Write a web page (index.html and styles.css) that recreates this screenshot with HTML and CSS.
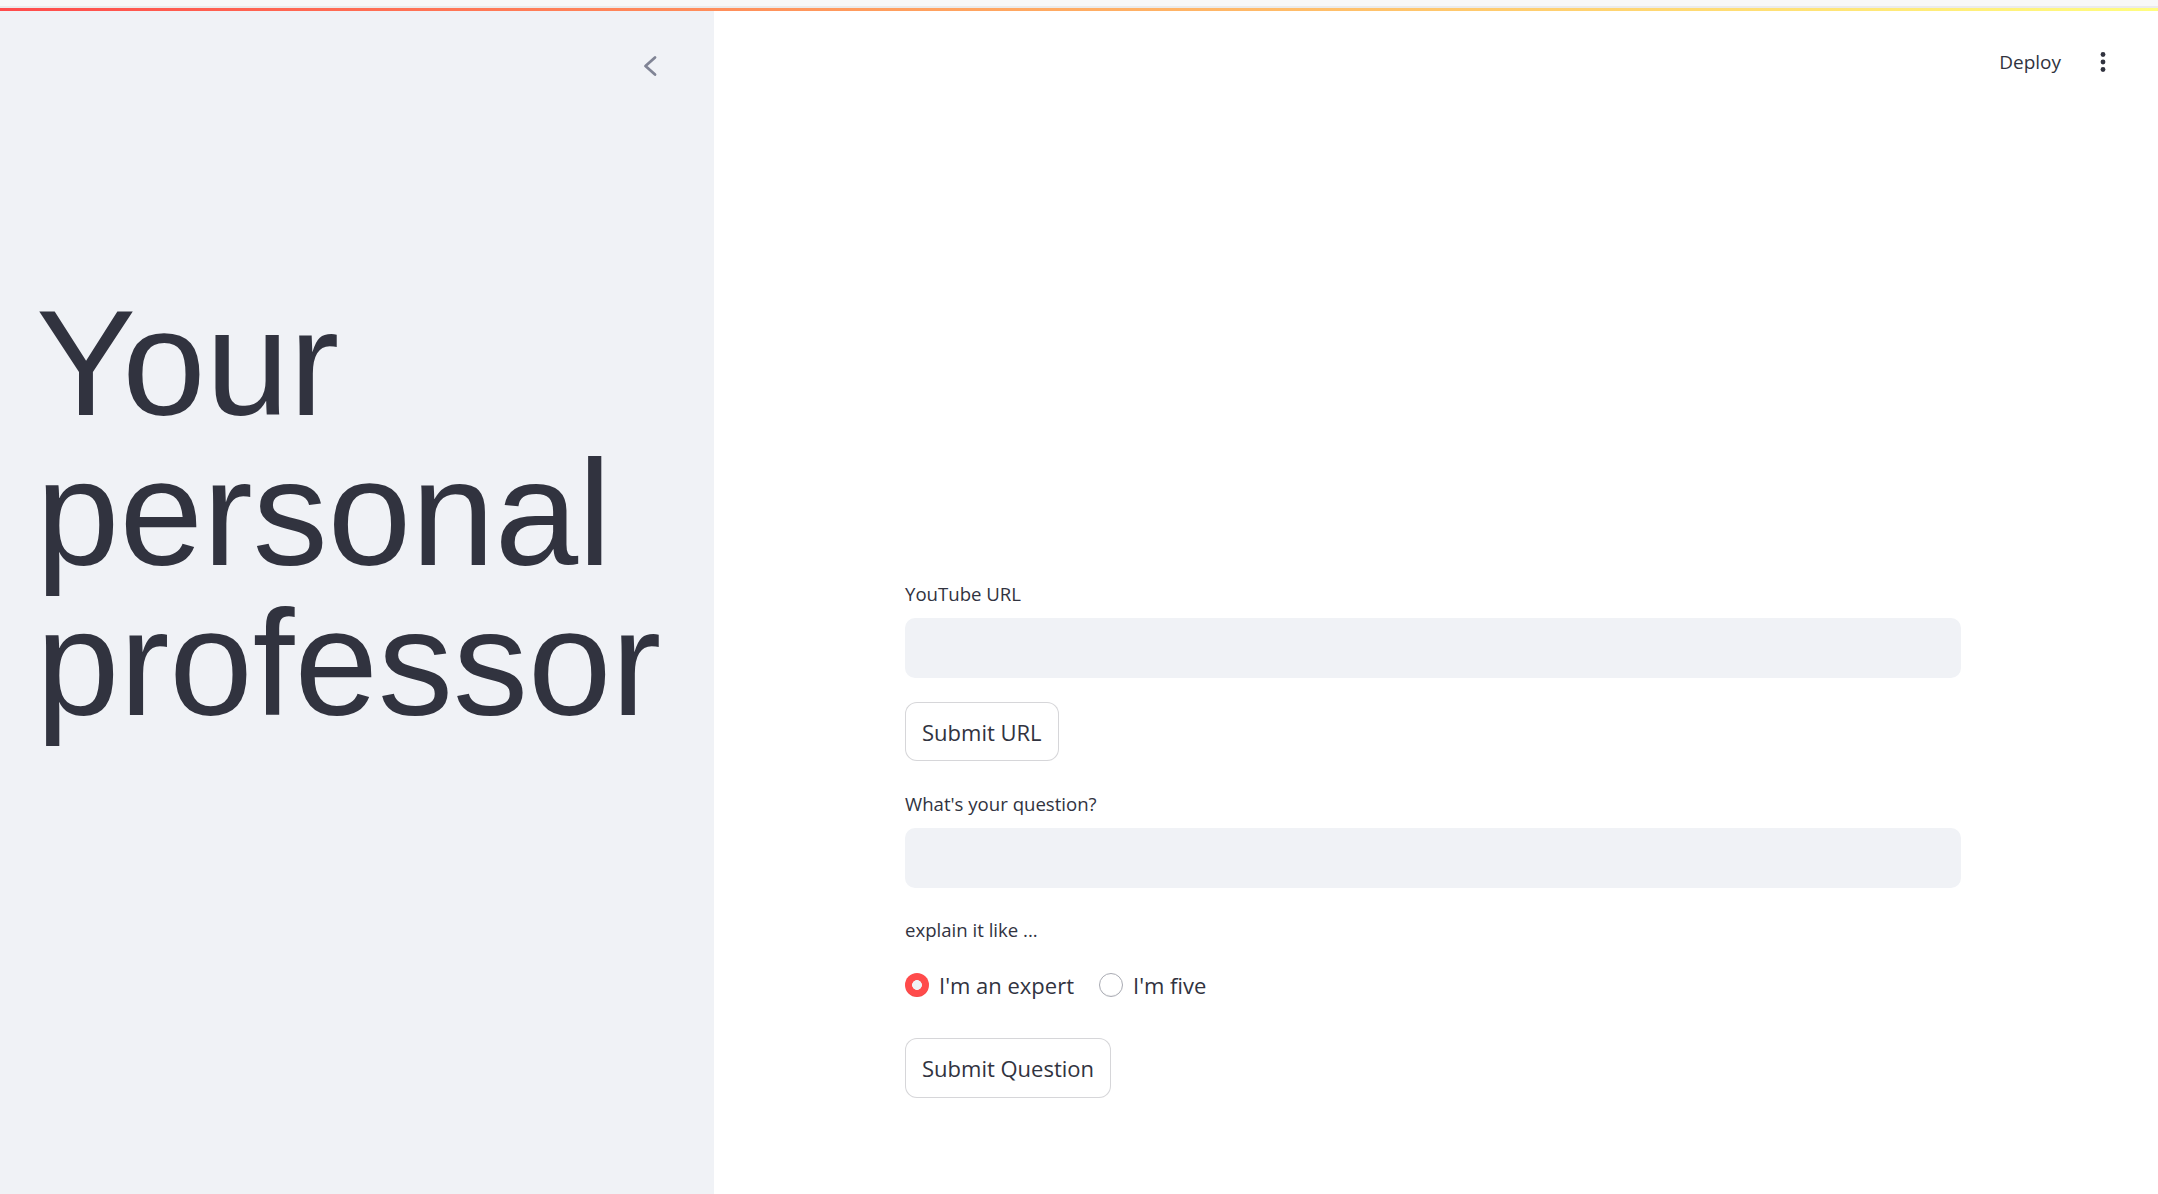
FILE: index.html
```html
<!DOCTYPE html>
<html lang="en">
<head>
<meta charset="utf-8">
<title>Your personal professor</title>
<link rel="stylesheet" href="styles.css">
</head>
<body>
<div class="topband"></div>
<div class="decoration"></div>
<div class="app">
  <aside class="sidebar">
    <div class="sidebar-head">
      <svg class="collapse" width="20" height="24" viewBox="0 0 20 24" aria-hidden="true">
        <path d="M15 3.5 L5.5 12 L15 20.5" fill="none" stroke="#808495" stroke-width="2.8" stroke-linecap="round" stroke-linejoin="round"/>
      </svg>
    </div>
    <h1 class="title">Your<br>personal<br>professor</h1>
  </aside>
  <main class="main">
    <header class="main-head">
      <span class="deploy">Deploy</span>
      <svg class="menu" width="24" height="24" viewBox="0 0 24 24" aria-hidden="true">
        <circle cx="12" cy="4.5" r="2.4" fill="#31333f"/>
        <circle cx="12" cy="12" r="2.4" fill="#31333f"/>
        <circle cx="12" cy="19.5" r="2.4" fill="#31333f"/>
      </svg>
    </header>
    <section class="content">
      <div class="label">YouTube URL</div>
      <div class="input"></div>
      <div><button class="btn btn-url">Submit URL</button></div>
      <div class="label">What's your question?</div>
      <div class="input input-q"></div>
      <div class="label">explain it like ...</div>
      <div class="radios">
        <div class="option"><span class="radio checked"></span><span>I'm an expert</span></div>
        <div class="option"><span class="radio"></span><span>I'm five</span></div>
      </div>
      <div><button class="btn btn-q">Submit Question</button></div>
    </section>
  </main>
</div>
</body>
</html>
```
FILE: styles.css
```css
* { box-sizing: border-box; }
html, body { margin: 0; padding: 0; }
body {
  font-family: "Open Sans", "Noto Sans", sans-serif;
  color: #31333f;
  background: #ffffff;
  height: 1194px;
  overflow: hidden;
}
.topband {
  height: 8px;
  background: #f8f8f8;
  border-bottom: 2px solid #ebebeb;
}
.decoration {
  height: 3px;
  background: linear-gradient(90deg, #ff4b4b 0%, #ff9c5e 40%, #fffd80 100%);
}
.app {
  display: flex;
  height: calc(1194px - 11px);
}
.sidebar {
  width: 714px;
  flex: 0 0 714px;
  background: #f0f2f6;
  padding: 0 26px 0 36px;
  display: flex;
  flex-direction: column;
}
.sidebar-head {
  display: flex;
  justify-content: flex-end;
  padding-top: 43px;
  padding-right: 28px;
}
.collapse { display: block; }
.title {
  margin: 210px 0 0 0;
  font-family: "Liberation Sans", Arial, sans-serif;
  font-weight: 400;
  font-size: 150px;
  line-height: 150px;
  color: #31333f;
  letter-spacing: 0;
  white-space: nowrap;
}
.main {
  flex: 1;
  display: flex;
  flex-direction: column;
  padding-right: 6px;
}
.main-head {
  height: 102px;
  display: flex;
  justify-content: flex-end;
  align-items: center;
  padding-right: 37px;
}
.deploy {
  font-size: 19px;
  color: #31333f;
  margin-right: 30px;
}
.menu { display: block; }
.content {
  width: 1056px;
  margin: 0 auto;
  padding-top: 462px;
}
.label {
  height: 38px;
  line-height: 38px;
  font-size: 18.6px;
  color: #31333f;
  margin-bottom: 5px;
}
.input {
  height: 60px;
  background: #f0f2f6;
  border-radius: 10px;
  margin-bottom: 24px;
}
.input-q { margin-bottom: 23px; }
.btn {
  height: 59px;
  padding: 0 16px;
  border: 1px solid rgba(49, 51, 63, 0.2);
  border-radius: 12px;
  background: #ffffff;
  color: #31333f;
  font-family: "Open Sans", "Noto Sans", sans-serif;
  font-size: 22px;
  display: inline-flex;
  align-items: center;
  cursor: pointer;
}
.btn-url { margin-bottom: 24px; }
.btn-q { margin-top: 34px; height: 60px; }
.radios {
  display: flex;
  gap: 25px;
  margin-top: 17px;
  height: 38px;
  line-height: 38px;
  font-size: 22px;
}
.option {
  display: flex;
  align-items: center;
  gap: 10px;
}
.radio {
  width: 24px;
  height: 24px;
  border-radius: 50%;
  border: 1.5px solid #a9abb3;
  background: #ffffff;
  box-shadow: inset 0 -1px 0 rgba(0,0,0,0.05);
  display: inline-block;
}
.radio.checked {
  border: none;
  background: radial-gradient(circle, #f0f2f6 0 4.6px, #ff4b4b 5.2px);
}
```
